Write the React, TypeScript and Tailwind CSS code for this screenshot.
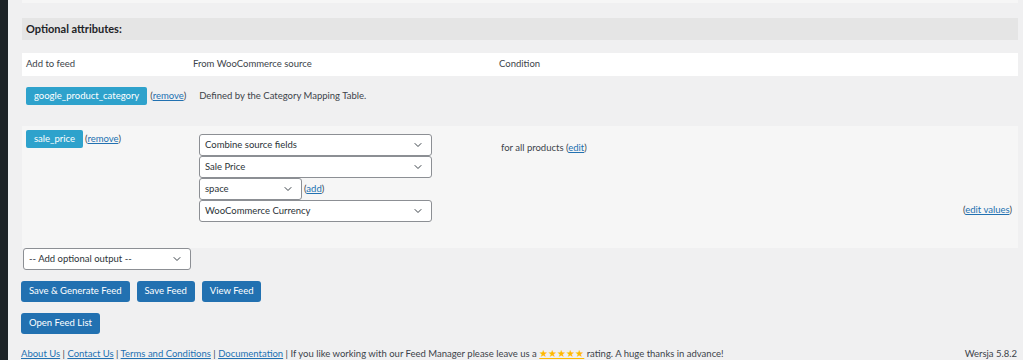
import { ChevronDown } from "lucide-react";

const font = "font-['Lato',_'Liberation_Sans',_sans-serif]";
const link = "text-[#2271b1] underline";
const tag = "inline-flex items-center h-[18px] px-[8px] bg-[#2ea2cc] text-white rounded-[2px] text-[9.5px]";
const btn = "h-[21px] px-[8px] bg-[#2271b1] text-white rounded-[3px] text-[9.5px] flex items-center";

function Select({ label, w = "w-[233px]" }: { label: string; w?: string }) {
  return (
    <div className={`${w} h-[22px] bg-white border border-[#8c8f94] rounded-[3px] flex items-center justify-between pl-[5px] pr-[7px] text-[9.5px] text-[#2c3338]`}>
      <span>{label}</span>
      <ChevronDown size={12} strokeWidth={2} className="text-[#3c434a]" />
    </div>
  );
}

export default function App() {
  return (
    <div className={`w-[1023px] h-[360px] bg-[#f0f0f1] flex overflow-hidden text-[#3c434a] ${font}`}>
      <div className="w-[8px] shrink-0 bg-[#1d2327]" />
      <div className="flex-1 flex flex-col pl-[13px] pr-[5px]">
        <div className="ml-[1px] h-[3px] shrink-0 bg-[#f6f6f6]" />

        <div className="ml-[1px] mt-[15px] h-[22px] shrink-0 bg-[#e5e5e5] flex items-center px-[4px] text-[11px] font-bold text-[#1d2327]">
          Optional attributes:
        </div>

        <div className="ml-[1px] mt-[13px] h-[23px] shrink-0 bg-white flex items-center text-[9.5px]">
          <div className="w-[167px] pl-[4px]">Add to feed</div>
          <div className="w-[306px] pl-[4px]">From WooCommerce source</div>
          <div className="pl-[4px]">Condition</div>
        </div>

        <div className="ml-[1px] h-[50px] shrink-0 flex items-start pt-[11px] pl-[4px] text-[9.5px]">
          <span className={tag}>google_product_category</span>
          <span className="ml-[3px] leading-[18px]">
            (<span className={link}>remove</span>)
          </span>
          <span className="ml-[13px] leading-[18px]">Defined by the Category Mapping Table.</span>
        </div>

        <div className="ml-[1px] h-[122px] shrink-0 bg-[#f6f6f6] flex text-[9.5px]">
          <div className="w-[177px] pl-[4px] pt-[4px] flex items-start">
            <span className={tag}>sale_price</span>
            <span className="ml-[2px] leading-[18px]">
              (<span className={link}>remove</span>)
            </span>
          </div>
          <div className="w-[302px] pt-[8px] flex flex-col">
            <Select label="Combine source fields" />
            <Select label="Sale Price" />
            <div className="flex items-center">
              <Select label="space" w="w-[103px]" />
              <span className="ml-[2px]">
                (<span className={link}>add</span>)
              </span>
            </div>
            <Select label="WooCommerce Currency" />
          </div>
          <div className="flex-1 flex flex-col pt-[15px] pr-[6px]">
            <div>
              for all products (<span className={link}>edit</span>)
            </div>
            <div className="mt-[48px] self-end">
              (<span className={link}>edit values</span>)
            </div>
          </div>
        </div>

        <div className="ml-[2px]">
          <Select label="-- Add optional output --" w="w-[168px]" />
        </div>

        <div className="mt-[11px] flex gap-[7px]">
          <button className={btn}>Save &amp; Generate Feed</button>
          <button className={btn}>Save Feed</button>
          <button className={btn}>View Feed</button>
        </div>

        <div className="mt-[11px] flex">
          <button className={btn}>Open Feed List</button>
        </div>

        <div className="mt-[13px] flex justify-between text-[9.5px]">
          <div>
            <span className={link}>About Us</span> | <span className={link}>Contact Us</span> |{" "}
            <span className={link}>Terms and Conditions</span> | <span className={link}>Documentation</span> | If
            you like working with our Feed Manager please leave us a{" "}
            <span className="text-[#ffb900] underline">★★★★★</span> rating. A huge thanks in advance!
          </div>
          <div className="pr-[1px]">Wersja 5.8.2</div>
        </div>
      </div>
    </div>
  );
}
